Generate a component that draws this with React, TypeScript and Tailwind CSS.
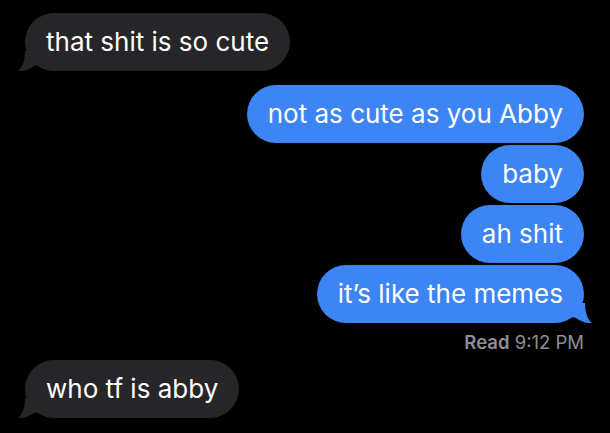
type Msg = { text: string; me: boolean; tail?: boolean; gap?: boolean };

const messages: Msg[] = [
  { text: "that shit is so cute", me: false, tail: true },
  { text: "not as cute as you Abby", me: true, gap: true },
  { text: "baby", me: true },
  { text: "ah shit", me: true },
  { text: "it\u2019s like the memes", me: true, tail: true },
];

function Tail({ me }: { me: boolean }) {
  if (me) {
    return (
      <svg
        className="absolute bottom-0 -right-[8px]"
        width="20"
        height="20"
        viewBox="0 0 20 20"
      >
        <path d="M13 0 C13 10 16 17 20 20 C14 20.5 8 18 4 15 L0 14 L0 0 Z" fill="#3d85f4" />
      </svg>
    );
  }
  return (
    <svg
      className="absolute bottom-0 -left-[7px]"
      width="20"
      height="20"
      viewBox="0 0 20 20"
    >
      <path d="M7 0 C7 10 4 17 0 20 C6 20.5 12 18 16 15 L20 14 L20 0 Z" fill="#262628" />
    </svg>
  );
}

function Bubble({ m }: { m: Msg }) {
  return (
    <div className={m.me ? "flex justify-end" : "flex justify-start"}>
      <div
        className={
          "relative rounded-[29px] px-[21px] py-[12px] text-[26px] leading-[34px] text-white " +
          (m.me ? "bg-[#3d85f4]" : "bg-[#262628]")
        }
      >
        {m.tail && <Tail me={m.me} />}
        <span className="relative">{m.text}</span>
      </div>
    </div>
  );
}

export default function App() {
  return (
    <div
      className="h-[433px] w-[610px] overflow-hidden bg-black pl-[25px] pr-[26px] pt-[13px]"
      style={{ fontFamily: "Inter, 'Liberation Sans', sans-serif" }}
    >
      <div className="flex flex-col gap-[2px]">
        {messages.map((m, i) => (
          <div key={i} className={m.gap ? "mt-[12px]" : ""}>
            <Bubble m={m} />
          </div>
        ))}
      </div>
      <div className="mt-[8px] text-right text-[18.5px] leading-[22px] text-[#8e8e93]">
        <span className="font-semibold">Read</span> 9:12 PM
      </div>
      <div className="mt-[7px]">
        <Bubble m={{ text: "who tf is abby", me: false, tail: true }} />
      </div>
    </div>
  );
}
